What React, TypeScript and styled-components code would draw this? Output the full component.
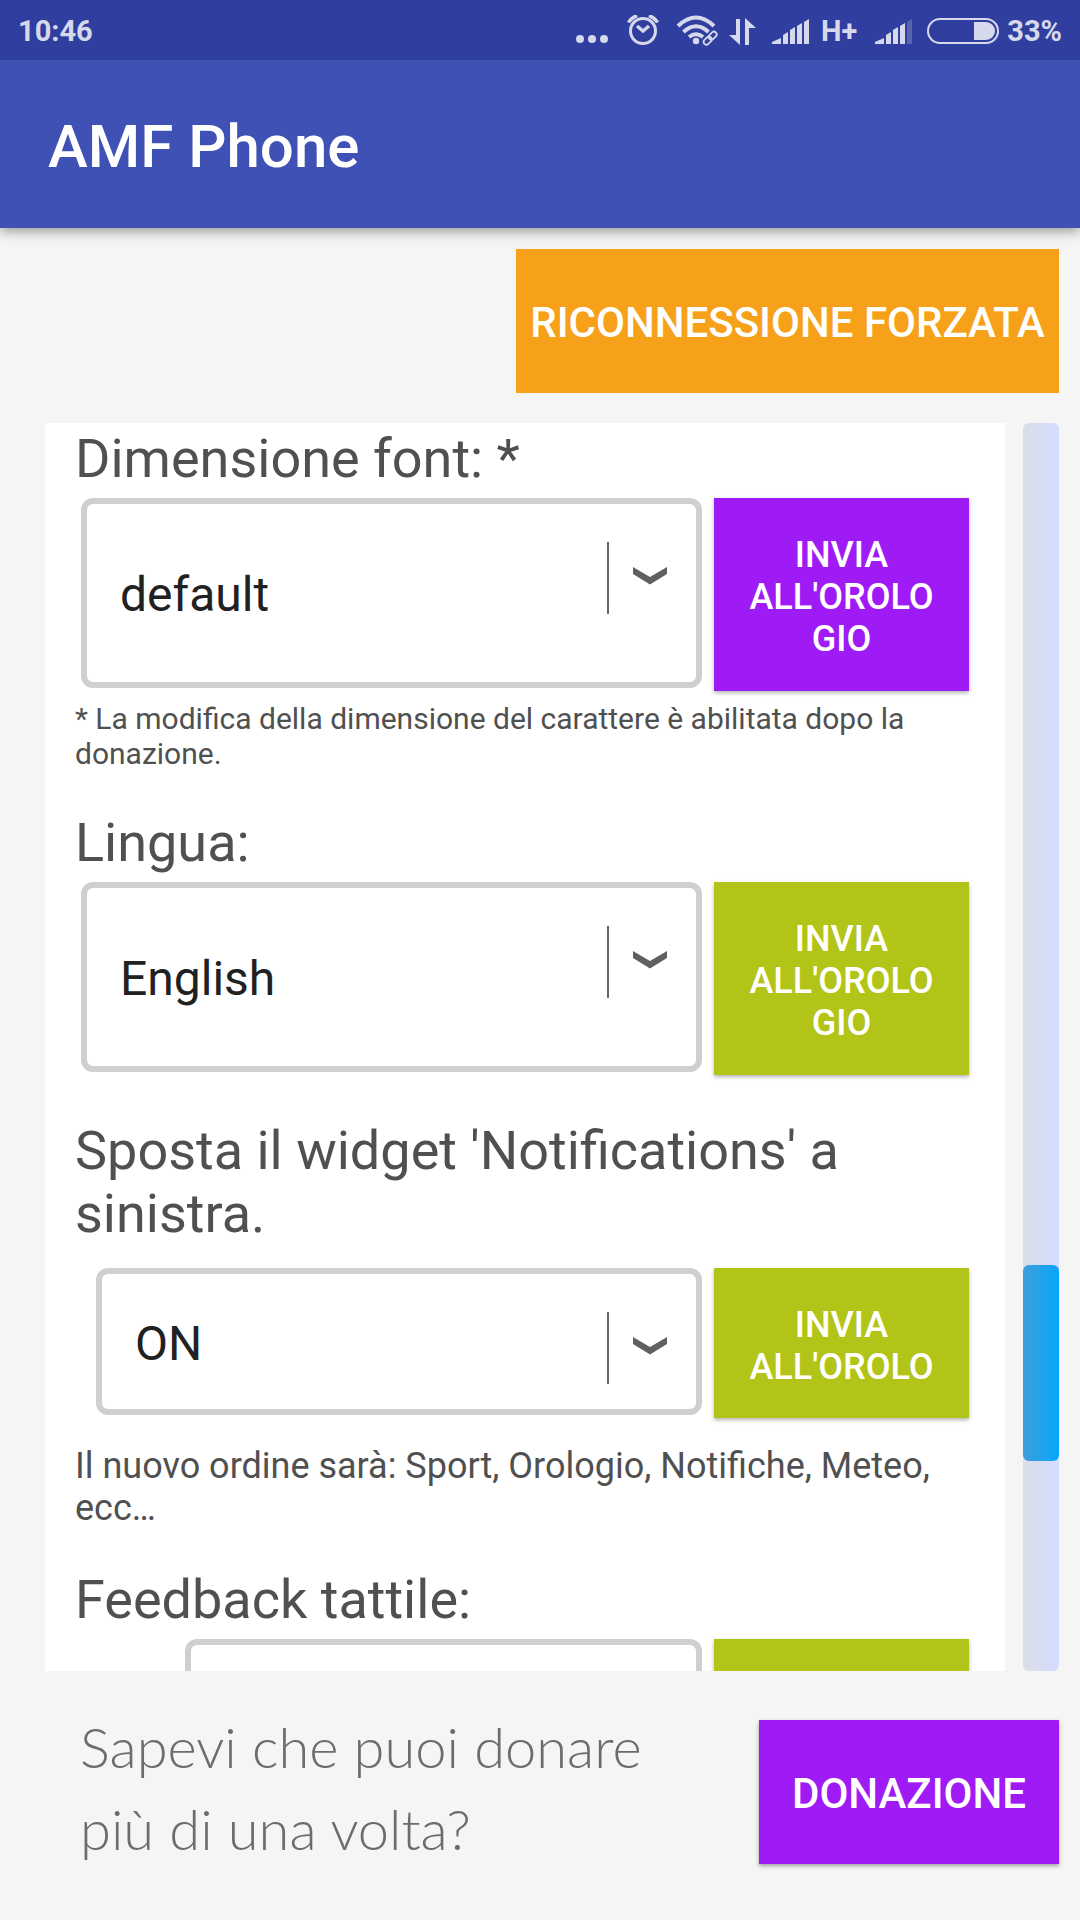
import React, { useId } from "react";
import styled, { createGlobalStyle } from "styled-components";

const GlobalStyle = createGlobalStyle`
  * { box-sizing: border-box; }
  body {
    margin: 0;
    background: #f5f5f5;
    font-family: Roboto, "Noto Sans", sans-serif;
  }
`;

const Screen = styled.div`
  display: flex;
  flex-direction: column;
  height: 100vh;
  overflow: hidden;
`;

const StatusBar = styled.div`
  position: relative;
  z-index: 1;
  display: flex;
  align-items: center;
  justify-content: space-between;
  height: 60px;
  padding: 2px 18px 0;
  background: #303f9f;
  color: #d6d9ec;
  font-size: 29px;
  font-weight: 700;
  line-height: 34px;
`;

const StatusIcons = styled.div`
  display: flex;
  align-items: center;
  gap: 8px;

  svg { display: block; }
`;

const AppBar = styled.header`
  display: flex;
  align-items: center;
  height: 168px;
  padding: 6px 48px 0;
  background: #3f51b5;
  box-shadow: 0 3px 12px rgba(0, 0, 0, 0.4);
`;

const Title = styled.h1`
  margin: 0;
  color: #fff;
  font-size: 60px;
  font-weight: 500;
  line-height: 70px;
`;

const Toolbar = styled.div`
  display: flex;
  justify-content: flex-end;
  padding: 21px 21px 30px;
`;

const ActionButton = styled.button<{ $color: string; $width: number; $raised?: boolean }>`
  width: ${(p) => p.$width}px;
  height: 144px;
  padding: 4px 0 0;
  border: 0;
  background: ${(p) => p.$color};
  box-shadow: ${(p) => (p.$raised ? "0 2px 4px rgba(0, 0, 0, 0.35)" : "none")};
  color: #fff;
  font: 500 42px/50px Roboto, sans-serif;
`;

const Main = styled.main`
  display: flex;
  flex: 1;
  gap: 18px;
  min-height: 0;
  padding: 0 21px 0 45px;
`;

const Panel = styled.div`
  flex: 1;
  overflow: hidden;
  padding: 4px 36px 0 30px;
  background: #fff;
  color: #505050;
`;

const Track = styled.div`
  display: grid;
  grid-template-rows: 842fr 196fr 210fr;
  width: 36px;
  border-radius: 6px;
  background: linear-gradient(90deg, #dbdee8, #d4dcff);
`;

const Thumb = styled.div`
  grid-row: 2;
  border-radius: 6px;
  background: linear-gradient(90deg, #3f9fd7, #06a5fd);
`;

const Setting = styled.section<{ $before?: number }>`
  margin-top: ${(p) => p.$before ?? 0}px;
`;

const Label = styled.label`
  display: block;
  font-size: 54px;
  line-height: 63px;
`;

const Row = styled.div<{ $gap: number; $indent: number; $height: number }>`
  display: flex;
  gap: 12px;
  height: ${(p) => p.$height}px;
  margin-top: ${(p) => p.$gap}px;
  padding-left: ${(p) => p.$indent}px;
`;

const SelectBox = styled.div`
  display: grid;
  flex: 1;
  padding-bottom: 3px;

  > * { grid-area: 1 / 1; }
`;

const Select = styled.select`
  width: 100%;
  padding: 4px 110px 0 33px;
  border: 6px solid #cfcfcf;
  border-radius: 12px;
  appearance: none;
  background: #fff;
  color: #212121;
  font: 400 48px/56px Roboto, sans-serif;
`;

const Indicator = styled.svg`
  justify-self: end;
  margin: 44px 34px 0 0;
  pointer-events: none;
`;

const SendButton = styled.button<{ $color: string }>`
  display: flex;
  align-items: flex-start;
  justify-content: center;
  width: 255px;
  padding: 36px 32px 0;
  border: 0;
  background: ${(p) => p.$color};
  box-shadow: 0 2px 4px rgba(0, 0, 0, 0.3);
  color: #fff;
  font: 500 36px/42px Roboto, sans-serif;
`;

const SendText = styled.span`
  overflow-wrap: anywhere;
  text-align: center;
`;

const Hint = styled.p<{ $large?: boolean }>`
  margin: ${(p) => (p.$large ? 27 : 10)}px 0 0;
  font-size: ${(p) => (p.$large ? 36 : 30)}px;
  line-height: ${(p) => (p.$large ? 42 : 35)}px;
`;

const Footer = styled.footer`
  display: flex;
  align-items: center;
  justify-content: space-between;
  padding: 35px 21px 42px 80px;
`;

const Slogan = styled.p`
  flex: 1;
  margin: 0;
  padding: 0 60px 8px 0;
  color: #6c6c6c;
  font-family: "Coming Soon", Lato, cursive;
  font-size: 56px;
  font-weight: 300;
  line-height: 82px;
`;

const PURPLE = "#9e1bf6";
const LIME = "#b2c417";

function Signal({ lead = 0, tail = 0, weak }: { lead?: number; tail?: number; weak?: boolean }) {
  const width = lead + 37 + tail;
  return (
    <svg width={width} height="25" viewBox={`${-lead} 0 ${width} 25`} fill="currentColor">
      <path d="M0 25v-2l9-4v6z" />
      <path d="M11 25V16l5-3v12z" />
      <path d="M18 25V11l5-3v17z" />
      <path d="M25 25V7l5-3v21z" />
      <path d="M32 25V3l5-3v25z" opacity={weak ? 0.25 : 1} />
    </svg>
  );
}

function Status() {
  return (
    <StatusBar>
      <span>10:46</span>
      <StatusIcons>
        <svg width="43" height="32" viewBox="0 0 43 32" fill="currentColor">
          <circle cx="4" cy="24" r="4" />
          <circle cx="16" cy="24" r="4" />
          <circle cx="28" cy="24" r="4" />
        </svg>
        <svg width="36" height="32" viewBox="0 0 36 32" fill="none" stroke="currentColor" strokeWidth="3">
          <circle cx="16" cy="16" r="12.5" />
          <path d="M10 11l6 5 6-5" strokeWidth="3.4" />
          <path d="M1.5 7.5Q4 3 10 0.5M30.5 7.5Q28 3 22 0.5" strokeWidth="3.6" />
        </svg>
        <svg width="50" height="32" viewBox="0 0 50 32" fill="none" stroke="currentColor">
          <path d="M7 11Q25 -6 43 11" strokeWidth="4" />
          <path d="M12.5 17Q25 5.5 37.5 17" strokeWidth="4" />
          <path d="M18 22Q25 16.5 32 22" strokeWidth="4" />
          <circle cx="25" cy="26" r="3.2" fill="currentColor" stroke="none" />
          <g transform="rotate(-45 39 23)" strokeWidth="1.8">
            <rect x="31" y="20.5" width="9" height="5.5" rx="2.7" />
            <rect x="38" y="20.5" width="9" height="5.5" rx="2.7" />
          </g>
        </svg>
        <svg width="35" height="27" viewBox="0 0 35 27" fill="currentColor">
          <path d="M7 1h4v26L0 17h7zM16 27V0l11 10h-7v17z" />
        </svg>
        <Signal tail={4} />
        <span>H+</span>
        <Signal lead={10} weak />
        <svg width="79" height="26" viewBox="-7 0 79 26">
          <rect x="1" y="1" width="70" height="24" rx="12" fill="none" stroke="currentColor" strokeWidth="2" />
          <path d="M47 4h12a9 9 0 0 1 0 18H47z" fill="currentColor" />
        </svg>
        <span>33%</span>
      </StatusIcons>
    </StatusBar>
  );
}

type FieldProps = {
  label: string;
  value: string;
  action?: string;
  color?: string;
  before?: number;
  gap?: number;
  indent?: number;
  height?: number;
  children?: React.ReactNode;
};

function Field({
  label,
  value,
  action = "INVIA ALL'OROLOGIO",
  color = LIME,
  before,
  gap = 8,
  indent = 6,
  height = 193,
  children,
}: FieldProps) {
  const id = useId();
  return (
    <Setting $before={before}>
      <Label htmlFor={id}>{label}</Label>
      <Row $gap={gap} $indent={indent} $height={height}>
        <SelectBox>
          <Select id={id} defaultValue={value}>
            <option>{value}</option>
          </Select>
          <Indicator width="62" height="72" viewBox="0 0 62 72" aria-hidden="true">
            <path d="M2 0v72" stroke="#666" strokeWidth="2" />
            <path d="M27 25l17 10 17-10v7L44 42.500 27 32z" fill="#606060" />
          </Indicator>
        </SelectBox>
        <SendButton type="button" $color={color} aria-label="Invia all'orologio">
          <SendText>{action}</SendText>
        </SendButton>
      </Row>
      {children}
    </Setting>
  );
}

export default function App() {
  return (
    <Screen>
      <GlobalStyle />
      <Status />
      <AppBar>
        <Title>AMF Phone</Title>
      </AppBar>
      <Toolbar>
        <ActionButton type="button" $color="#f7a11b" $width={543}>RICONNESSIONE FORZATA</ActionButton>
      </Toolbar>
      <Main>
        <Panel>
          <Field label="Dimensione font: *" value="default" color={PURPLE}>
            <Hint>* La modifica della dimensione del carattere è abilitata dopo la donazione.</Hint>
          </Field>
          <Field label="Lingua:" value="English" before={40} />
          <Field
            label="Sposta il widget 'Notifications' a sinistra."
            value="ON"
            action="INVIA ALL'OROLO"
            before={44}
            gap={23}
            indent={21}
            height={150}
          >
            <Hint $large>Il nuovo ordine sarà: Sport, Orologio, Notifiche, Meteo, ecc…</Hint>
          </Field>
          <Field label="Feedback tattile:" value="" action="" before={39} indent={110} />
        </Panel>
        <Track>
          <Thumb />
        </Track>
      </Main>
      <Footer>
        <Slogan>Sapevi che puoi donare più di una volta?</Slogan>
        <ActionButton type="button" $color={PURPLE} $width={300} $raised>DONAZIONE</ActionButton>
      </Footer>
    </Screen>
  );
}
